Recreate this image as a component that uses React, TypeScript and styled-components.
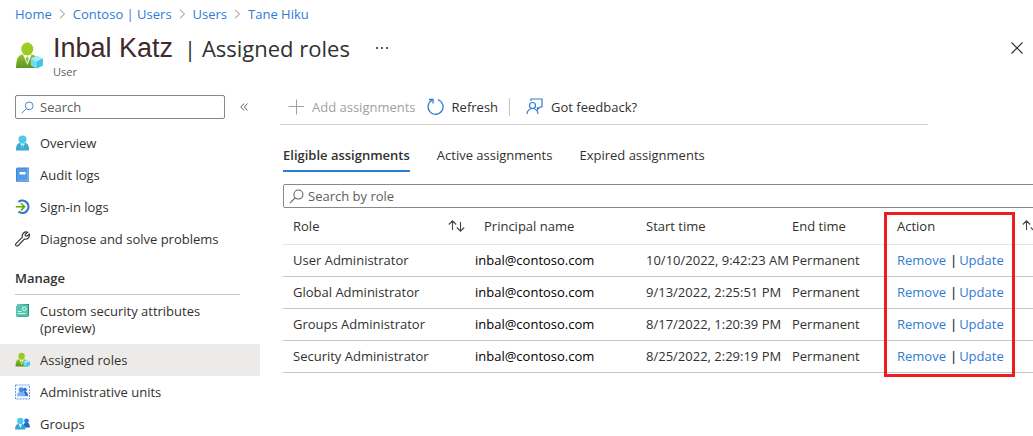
import React from "react";
import styled, { createGlobalStyle } from "styled-components";

const GlobalStyle = createGlobalStyle`
  *, *::before, *::after { box-sizing: border-box; }
  body {
    margin: 0;
    background: #fff;
    color: #323130;
    font: 13px/18px "Open Sans", "Noto Sans", sans-serif;
    overflow: hidden;
  }
  button, input { font: inherit; color: inherit; }
  a { color: #2f7bd6; text-decoration: none; }
  svg { display: block; flex: none; }
`;

const Page = styled.div`
  height: 100vh;
  overflow: hidden;
`;

const Breadcrumb = styled.nav`
  display: flex;
  align-items: center;
  height: 28px;
  padding-left: 15px;
  gap: 6px;
`;

const Header = styled.header`
  display: flex;
  align-items: flex-start;
  height: 67px;
  padding: 6px 10px 0 15px;
`;

const HeaderIcon = styled.div`
  padding-top: 7px;
  margin-right: 10px;
`;

const Title = styled.h1`
  display: flex;
  align-items: baseline;
  gap: 11px;
  margin: 0;
  font-size: 22px;
  line-height: 28px;
  font-weight: 400;
`;

const UserName = styled.span`
  font-family: "Liberation Sans", Arial, sans-serif;
  font-size: 27px;
  color: #41292b;
`;

const Subtitle = styled.div`
  margin-top: 1px;
  font-size: 11px;
  color: #605e5c;
`;

const IconButton = styled.button`
  display: flex;
  align-items: center;
  justify-content: center;
  width: 24px;
  height: 24px;
  padding: 0;
  border: 0;
  background: none;
`;

const MoreButton = styled(IconButton)`
  margin: 2px 0 0 20px;
`;

const CloseButton = styled(IconButton)`
  margin: 2px -6px 0 auto;
`;

const Body = styled.div`
  display: flex;
`;

const Sidebar = styled.aside`
  flex: none;
  width: 260px;
`;

const SidebarTop = styled.div`
  display: flex;
  align-items: center;
  gap: 7px;
  padding: 0 0 8px 15px;
`;

const SearchBox = styled.label<{ $wide?: boolean }>`
  display: flex;
  align-items: center;
  gap: ${(p) => (p.$wide ? 4 : 6)}px;
  width: ${(p) => (p.$wide ? "auto" : "210px")};
  height: 24px;
  padding-left: 5px;
  border: 1px solid #8a8886;
  border-radius: 2px;
  color: ${(p) => (p.$wide ? "#605e5c" : "#3b7fd4")};
`;

const SearchInput = styled.input`
  flex: 1;
  min-width: 0;
  padding: 0;
  border: 0;
  outline: 0;
  background: none;
  &::placeholder { color: #605e5c; opacity: 1; }
`;

const NavLink = styled.a<{ $active?: boolean }>`
  display: flex;
  gap: 10px;
  padding: 8px 15px 7px;
  line-height: 17px;
  color: #323130;
  background: ${(p) => (p.$active ? "#edebe9" : "transparent")};
`;

const NavHeading = styled.h2`
  margin: 14px 20px 0 15px;
  padding-bottom: 7px;
  border-bottom: 1px solid #c8c6c4;
  font-size: 13px;
  line-height: 18px;
  font-weight: 600;
`;

const NavText = styled.span`
  max-width: 180px;
`;

const Main = styled.main`
  flex: 1;
  min-width: 0;
  padding-left: 20px;
  overflow: hidden;
`;

const Toolbar = styled.div`
  display: flex;
  align-items: center;
  height: 30px;
  margin-right: 105px;
  padding-left: 8px;
  border-bottom: 1px solid #d2d0ce;
`;

const Command = styled.button`
  display: flex;
  align-items: center;
  gap: 8px;
  margin-right: 11px;
  padding: 0 0 6px;
  border: 0;
  background: none;
  white-space: nowrap;
  &:disabled { color: #a19f9d; }
`;

const Divider = styled.span`
  width: 1px;
  height: 18px;
  margin: 0 16px 6px 0;
  background: #c8c6c4;
`;

const Content = styled.div`
  margin-right: -15px;
  padding-left: 3px;
`;

const Tabs = styled.div`
  display: flex;
  gap: 27px;
  padding: 20px 0 12px;
`;

const Tab = styled.button<{ $active?: boolean }>`
  height: 27px;
  padding: 0 0 6px;
  border: 0;
  border-bottom: 2px solid ${(p) => (p.$active ? "#2b7cd3" : "transparent")};
  background: none;
  font-weight: ${(p) => (p.$active ? 600 : 400)};
`;

const TableArea = styled.div`
  position: relative;
`;

const Table = styled.table`
  width: 100%;
  border-collapse: collapse;
  table-layout: fixed;
`;

const Th = styled.th<{ $width?: number }>`
  width: ${(p) => (p.$width ? `${p.$width}px` : "auto")};
  height: 36px;
  padding: 0 9px 0 10px;
  border-bottom: 1px solid #e6e4e2;
  font-weight: 500;
  text-align: left;
`;

const ThContent = styled.div`
  display: flex;
  align-items: center;
  justify-content: space-between;
`;

const Td = styled.td<{ $mail?: boolean }>`
  height: 32px;
  padding: 0 0 0 ${(p) => (p.$mail ? 1 : 10)}px;
  border-bottom: 1px solid #c8c6c4;
  color: ${(p) => (p.$mail ? "#000" : "inherit")};
  white-space: nowrap;
`;

const Actions = styled.div`
  display: flex;
  gap: 2px;
`;

const Bar = styled.span`
  margin-left: 2px;
  font-weight: 600;
`;

const Highlight = styled.div`
  position: absolute;
  top: 4px;
  left: 601px;
  width: 131px;
  height: 165px;
  border: 3px solid #ec1c1f;
  pointer-events: none;
`;

const Chevron = () => (
  <svg width="9" height="10" viewBox="0 0 9 10" fill="none" stroke="#8a8886">
    <path d="M2 .8 6.500 5 2 9.200" />
  </svg>
);

const SearchIcon = ({ size }: { size: number }) => (
  <svg width={size} height={size} viewBox="0 0 14 14" fill="none" stroke="currentColor">
    <circle cx="8.800" cy="5.200" r="4.200" />
    <path d="M5.800 8.200.8 13.200" />
  </svg>
);

const SortIcon = () => (
  <svg width="17" height="12" viewBox="0 0 17 12" fill="none" stroke="#484644" strokeWidth="1.100">
    <path d="M4.500 10V1M.8 4.500 4.500.8l3.700 3.700M12.500 2v9M8.800 7.500l3.700 3.700 3.700-3.700" />
  </svg>
);

const RoleIcon = ({ size }: { size: number }) => (
  <svg width={size} height={size} viewBox="0 0 28 28">
    <defs>
      <linearGradient id="green" x1="0" y1="0" x2="0" y2="1">
        <stop offset="0" stopColor="#93c424" />
        <stop offset="1" stopColor="#5e9624" />
      </linearGradient>
    </defs>
    <path d="M1 27v-1.500Q1.500 14 7 13.500h10q6 .5 7 12V27z" fill="url(#green)" />
    <path d="m8 13.500 4.500 10.500 4-10.500z" fill="#fff" />
    <path d="m12.300 15.500 1.500 2-1.500 5-1.500-5z" fill="#8dbf2b" />
    <ellipse cx="12.300" cy="8" rx="6" ry="6.500" fill="#9ccb22" />
    <path d="m21.800 15 6 2.500v7l-6 3-5.800-3v-7z" fill="#6fdcf3" />
    <path d="m21.800 15 6 2.500-6 3-5.800-3z" fill="#a9ebfa" />
    <path d="m21.800 20.500 6-3v7l-6 3z" fill="#3fc4e6" />
  </svg>
);

const OverviewIcon = () => (
  <svg width="15" height="16" viewBox="0 0 15 16">
    <path d="M1 15.500V14q.3-5.500 3.500-6h6q3.200.5 3.500 6v1.500z" fill="#3fa9d0" />
    <path d="M5.200 8.200 7.500 14l2.300-5.800z" fill="#e5f8fd" />
    <path d="m7.500 9.500 1 1-1 3.500-1-3.500z" fill="#3fb1d8" />
    <circle cx="7.500" cy="4.500" r="4" fill="#4bcbe8" />
  </svg>
);

const AuditIcon = () => (
  <svg width="15" height="16" viewBox="0 0 15 16">
    <path d="M1 2q0-1.500 1.500-1.500H14V15H2.500Q1 15 1 13.500z" fill="#3f86d8" />
    <path d="M12.500 1.200H13.300V14.300H2.500q-.8-.4 0-.8h10z" fill="#d9e9fb" />
    <path d="M2 1.500h10.500v12H2z" fill="#529be9" />
    <path d="M4.500 5h6v2.500h-6z" fill="#fff" />
  </svg>
);

const SignInIcon = () => (
  <svg width="15" height="16" viewBox="0 0 15 16" fill="none">
    <path d="M3.500 2.800A6.200 6.200 0 1 1 3.500 12.700" stroke="#2f73cf" strokeWidth="2.200" />
    <path d="M.8 7.800h8.700M6 4.200l3.600 3.600L6 11.400" stroke="#65a800" strokeWidth="1.600" />
  </svg>
);

const WrenchIcon = () => (
  <svg width="15" height="16" viewBox="0 0 15 16" fill="none" stroke="#323130" strokeWidth="1.100">
    <path d="M12.700 1.200a4 4 0 0 0-5.300 4.900L1 12.500q-.9 1.200.1 2.100t2.200-.1l6-6.400A4 4 0 0 0 14.200 3L12 5.100l-1.700-.4-.1-1.500z" />
  </svg>
);

const AttributesIcon = () => (
  <svg width="15" height="16" viewBox="0 0 15 16">
    <path d="M2 1.500 14 1v12l-1.500 1H2z" fill="#258f80" />
    <path d="M1 3.500 2.500 2H13v11.500H1z" fill="#56c5b0" />
    <circle cx="9.300" cy="5.800" r="1.800" fill="none" stroke="#e4fff7" />
    <path d="M2.500 8.500h4M2.500 10.500h8" stroke="#d2f6ec" />
  </svg>
);

const UnitsIcon = () => (
  <svg width="15" height="16" viewBox="0 0 15 16">
    <rect x=".5" y="1" width="14" height="14" fill="#f3f8ff" stroke="#6b9be0" strokeDasharray="2 1" />
    <path d="M7 12q.3-4.500 3-4.500t3 4.500z" fill="#2968cc" />
    <circle cx="9.800" cy="5.800" r="2" fill="#3470d0" />
    <path d="M2 12.200q.3-4.200 3-4.200h2.500q2.700 0 3 4.200z" fill="#7fb2fa" />
    <circle cx="6.200" cy="5.800" r="2.500" fill="#4d87e6" />
  </svg>
);

const GroupsIcon = () => (
  <svg width="15" height="16" viewBox="0 0 15 16">
    <path d="M8 11.500q.3-5 3.500-5t3.500 5z" fill="#2067c6" />
    <circle cx="11.500" cy="4.800" r="2.400" fill="#2b7bd9" />
    <path d="M0 13.500q.3-5.500 3.500-5.500H7q3.200 0 3.500 5.500z" fill="#36a5d0" />
    <path d="m3.700 8 1.600 4L7 8z" fill="#e4f8ff" />
    <circle cx="5.300" cy="5" r="3.200" fill="#4bc9e8" />
  </svg>
);

const PlusIcon = () => (
  <svg width="16" height="16" viewBox="0 0 16 16" stroke="#a19f9d">
    <path d="M8.500 .5v15M.5 7.500h15.500" />
  </svg>
);

const RefreshIcon = () => (
  <svg width="17" height="18" viewBox="0 0 17 18" fill="none" stroke="#2b7cd3" strokeWidth="1.300">
    <path d="M11 1.700A7.500 7.500 0 1 1 5 2.200" />
    <path d="M2 1.500h4v4" />
  </svg>
);

const FeedbackIcon = () => (
  <svg width="17" height="17" viewBox="0 0 17 17" fill="none" stroke="#2b7cd3" strokeWidth="1.200">
    <path d="M5 3V1h11v8h-2L11.500 11.500V9" />
    <circle cx="6.500" cy="7.500" r="3" />
    <path d="M1 16a5.500 5.500 0 0 1 11 0" />
  </svg>
);

const crumbs = ["Home", "Contoso | Users", "Users", "Tane Hiku"];

const generalLinks = [
  { label: "Overview", icon: <OverviewIcon /> },
  { label: "Audit logs", icon: <AuditIcon /> },
  { label: "Sign-in logs", icon: <SignInIcon /> },
  { label: "Diagnose and solve problems", icon: <WrenchIcon /> },
];

const manageLinks = [
  { label: "Custom security attributes (preview)", icon: <AttributesIcon /> },
  { label: "Assigned roles", icon: <RoleIcon size={15} />, active: true },
  { label: "Administrative units", icon: <UnitsIcon /> },
  { label: "Groups", icon: <GroupsIcon /> },
];

const assignments = [
  { role: "User Administrator", start: "10/10/2022, 9:42:23 AM" },
  { role: "Global Administrator", start: "9/13/2022, 2:25:51 PM" },
  { role: "Groups Administrator", start: "8/17/2022, 1:20:39 PM" },
  { role: "Security Administrator", start: "8/25/2022, 2:29:19 PM" },
];

export default function App() {
  return (
    <Page>
      <GlobalStyle />
      <Breadcrumb aria-label="Breadcrumb">
        {crumbs.map((crumb, i) => (
          <React.Fragment key={crumb}>
            {i > 0 && <Chevron />}
            <a href="#">{crumb}</a>
          </React.Fragment>
        ))}
      </Breadcrumb>
      <Header>
        <HeaderIcon>
          <RoleIcon size={28} />
        </HeaderIcon>
        <div>
          <Title>
            <UserName>Inbal Katz</UserName>
            <span>| Assigned roles</span>
          </Title>
          <Subtitle>User</Subtitle>
        </div>
        <MoreButton aria-label="More">
          <svg width="12" height="2" viewBox="0 0 12 2" fill="#605e5c">
            <path d="M0 0h2v2H0zM5 0h2v2H5zM10 0h2v2h-2z" />
          </svg>
        </MoreButton>
        <CloseButton aria-label="Close">
          <svg width="12" height="12" viewBox="0 0 12 12" stroke="#323130" strokeWidth="1.200">
            <path d="m.5.5 11 11m0-11-11 11" />
          </svg>
        </CloseButton>
      </Header>
      <Body>
        <Sidebar>
          <SidebarTop>
            <SearchBox>
              <SearchIcon size={13} />
              <SearchInput placeholder="Search" aria-label="Search" />
            </SearchBox>
            <IconButton aria-label="Collapse menu">
              <svg width="8" height="8" viewBox="0 0 8 8" fill="none" stroke="#605e5c">
                <path d="M4 .5.8 4 4 7.500M7.500.5 4.300 4l3.200 3.500" />
              </svg>
            </IconButton>
          </SidebarTop>
          <nav>
            {generalLinks.map((l) => (
              <NavLink key={l.label} href="#">
                {l.icon}
                <NavText>{l.label}</NavText>
              </NavLink>
            ))}
            <NavHeading>Manage</NavHeading>
            {manageLinks.map((l) => (
              <NavLink key={l.label} href="#" $active={l.active}>
                {l.icon}
                <NavText>{l.label}</NavText>
              </NavLink>
            ))}
          </nav>
        </Sidebar>
        <Main>
          <Toolbar>
            <Command disabled>
              <PlusIcon />
              Add assignments
            </Command>
            <Command>
              <RefreshIcon />
              Refresh
            </Command>
            <Divider />
            <Command>
              <FeedbackIcon />
              Got feedback?
            </Command>
          </Toolbar>
          <Content>
            <Tabs role="tablist">
              <Tab role="tab" aria-selected="true" $active>
                Eligible assignments
              </Tab>
              <Tab role="tab" aria-selected="false">Active assignments</Tab>
              <Tab role="tab" aria-selected="false">Expired assignments</Tab>
            </Tabs>
            <SearchBox $wide>
              <SearchIcon size={15} />
              <SearchInput placeholder="Search by role" aria-label="Search by role" />
            </SearchBox>
            <TableArea>
              <Table>
                <thead>
                  <tr>
                    <Th $width={191}>
                      <ThContent>
                        Role
                        <SortIcon />
                      </ThContent>
                    </Th>
                    <Th $width={162}>Principal name</Th>
                    <Th $width={146}>Start time</Th>
                    <Th $width={105}>End time</Th>
                    <Th>
                      <ThContent>
                        Action
                        <SortIcon />
                      </ThContent>
                    </Th>
                  </tr>
                </thead>
                <tbody>
                  {assignments.map((a) => (
                    <tr key={a.role}>
                      <Td>{a.role}</Td>
                      <Td $mail>inbal@contoso.com</Td>
                      <Td>{a.start}</Td>
                      <Td>Permanent</Td>
                      <Td>
                        <Actions>
                          <a href="#">Remove</a>
                          <Bar>|</Bar>
                          <a href="#">Update</a>
                        </Actions>
                      </Td>
                    </tr>
                  ))}
                </tbody>
              </Table>
              <Highlight />
            </TableArea>
          </Content>
        </Main>
      </Body>
    </Page>
  );
}
